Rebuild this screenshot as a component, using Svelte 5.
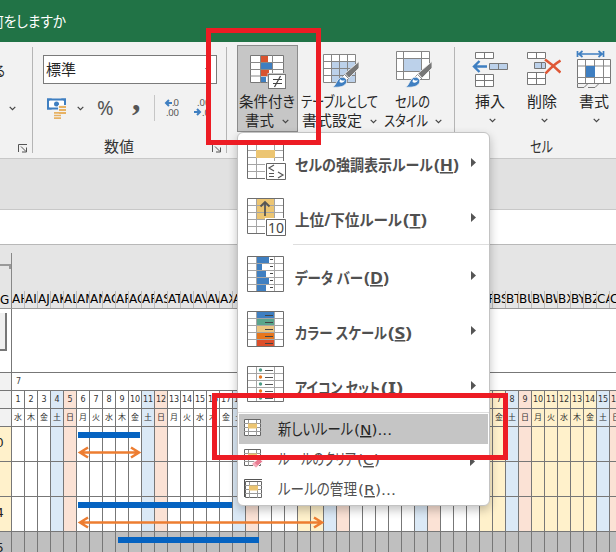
<script>
  const letters = 'ABCDEFGHIJKLMNOPQRSTUVWXYZ';
  const week = ['水', '木', '金', '土', '日', '月', '火'];
  const holidays = [22, 23];
  const days = Array.from({ length: 47 }, (_, i) => {
    const n = i + 33;
    const name = letters[Math.floor(n / 26) - 1] + letters[n % 26];
    const w = week[i % 7];
    let kind = '';
    if (w === '土') kind = 'sat';
    else if (w === '日') kind = 'sun';
    else if (holidays.includes(i) || i >= 36) kind = 'off';
    return { name, day: i < 31 ? i + 1 : i - 30, w, kind };
  });
  const big = [
    { icon: 'highlight', text: 'セルの強調表示ルール', key: 'H', w: 138, kw: 25 },
    { icon: 'top', text: '上位/下位ルール', key: 'T', w: 107, kw: 24 },
    { icon: 'bars', text: 'データ バー', key: 'D', w: 68, kw: 25, sep: true },
    { icon: 'scale', text: 'カラー スケール', key: 'S', w: 92, kw: 24 },
    { icon: 'set', text: 'アイコン セット', key: 'I', w: 85, kw: 22 }
  ];
  const small = [
    { icon: 'new', text: '新しいルール', key: 'N', end: ')...', w: 75, kw: 38, on: true },
    { icon: 'clear', text: 'ルールのクリア', key: 'C', end: ')', w: 78, kw: 23, arrow: true },
    { icon: 'manage', text: 'ルールの管理', key: 'R', end: ')...', w: 79, kw: 38 }
  ];
  const scale = ['#3f7fc1', '#5ba58c', '#ecc580', '#e8761c', '#dc4f2b'];
  const barW = [12, 5, 9, 12, 9];
</script>

{#snippet label(text, w, size = 15)}
  <svg class="label" width={w} height="20"><text x="0" y="15" font-size={size} textLength={w} lengthAdjust="spacingAndGlyphs">{text}</text></svg>
{/snippet}

{#snippet chev()}
  <svg class="chev" width="7" height="5" viewBox="0 0 7 5"><path d="M.7.8 3.5 3.6 6.3.8" fill="none" stroke="#444" stroke-width="1.2" /></svg>
{/snippet}

{#snippet launcher()}
  <svg class="launcher" width="10" height="9" viewBox="0 0 10 9"><path d="M.5 8V.5H9M3 2.5l5 5M8.5 3.5V8H4" fill="none" stroke="#555" /></svg>
{/snippet}

{#snippet brush()}
  <path d="M37 11.5V18L27 28l-4-4.5z" fill="#777" stroke="#f2f2f2" stroke-width=".8" />
  <path d="M22.5 24.5l4 4-2 2-4-4z" fill="#fff" stroke="#777" stroke-width=".8" />
  <path d="M10.5 37c4-1.5 3.5-7 8-9.5 4-1.5 8 2.5 5.5 6-2.5 4-9 4-13.5 3.5z" fill="#3f7fc1" stroke="#f2f2f2" stroke-width=".8" />
  <path d="M18 29c1.5 1.8 3.5 2 5 1-1 2.5-3.5 3.5-5.5 2z" fill="#fff" />
{/snippet}

<div class="window">
  <header>{@render label('何をしますか', 76, 14.5)}</header>

  <div class="ribbon">
    <div class="group stub">
      <div class="ru">{@render label('る', 11, 14)}</div>
      <div class="stubchev">{@render chev()}</div>
      {@render launcher()}
    </div>

    <div class="group number">
      <div class="combo">
        {@render label('標準', 30)}
        <svg width="6" height="4" viewBox="0 0 6 4"><path d="M0 0h6L3 4z" fill="#555" /></svg>
      </div>
      <div class="tools">
        <svg width="20" height="21" viewBox="0 0 20 21">
          <rect x="1" y="1.5" width="17" height="9" fill="#fff" stroke="#3f7fc1" stroke-width="2" />
          <path d="M0 .5h5L0 4.5zM19 .5h-5l5 4zM0 11.500h5L0 8z" fill="#3f7fc1" />
          <circle cx="9.5" cy="6" r="2.5" fill="#3f7fc1" />
          <path d="M11 7h8v12h-5v1.5H6V13h5z" fill="#f2f2f2" />
          <path d="M12 8h7v2h-7zM12 11h7v2h-7zM12 14h7v2h-7zM7 14h6v1.8H7zM7 16.7h7v1.6H7zM7 19.2h7V21H7z" fill="#e7b264" />
        </svg>
        <span class="c1">{@render chev()}</span>
        <span class="pct">%</span>
        <span class="comma">,</span>
        <i></i>
        <svg class="dec" width="54" height="22" viewBox="0 0 54 22">
          <g fill="none" stroke="#3f7fc1" stroke-width="2"><path d="M8 5H2M5 2 2 5l3 3M30 14h6M33 11l3 3-3 3" /></g>
          <g font-size="9.5" fill="#555"><text x="8" y="8" textLength="7">.0</text><text x="2" y="17.5" textLength="13">.00</text><text x="33" y="8">.00</text><text x="38" y="17.5">.0</text></g>
        </svg>
      </div>
      <div class="title t1">{@render label('数値', 30)}</div>
      {@render launcher()}
    </div>

    <div class="group styles">
      <div class="btn active">
        <svg width="38" height="40" viewBox="0 0 38 40">
          <path d="M1.5 5.5h33v27h-33z" fill="#fff" stroke="#777" />
          <path d="M1 12.5h34M1 19.5h34M1 26h34M11.500 5v28M23.500 5v28" stroke="#888" />
          <path d="M12 6h7v6h-7zM12 20h8v6h-8z" fill="#d9532f" />
          <path d="M12 13h11v6H12zM12 27h5v5h-5z" fill="#3f7fc1" />
          <rect x="18.5" y="23" width="20" height="16.5" fill="#c6c6c6" />
          <rect x="19.5" y="24.5" width="17" height="14" fill="#fff" stroke="#777" />
          <path d="M24 29.5h9M24 33.5h9M31.500 26l-6 11" fill="none" stroke="#444" stroke-width="1.2" />
        </svg>
        <div class="l1">{@render label('条件付き', 56)}</div>
        <div class="l2">{@render label('書式', 29)}{@render chev()}</div>
      </div>
      <div class="btn table">
        <svg width="38" height="40" viewBox="0 0 38 40">
          <path d="M1.5 4.5h32v28h-32z" fill="#fff" />
          <path d="M9.5 11.5h24v21h-24z" fill="#bcd1ea" />
          <path d="M1.5 4.5h32v28h-32zM1 11.5h33M1 18.5h33M1 25.5h33M9.500 4v29M17.500 4v29M25.500 4v29" fill="none" stroke="#858585" />
          {@render brush()}
        </svg>
        <div class="l1">{@render label('テーブルとして', 77)}</div>
        <div class="l2">{@render label('書式設定', 60)}{@render chev()}</div>
      </div>
      <div class="btn cellstyle">
        <svg width="38" height="40" viewBox="0 0 38 40">
          <path d="M1.5 1.5h33v28h-33z" fill="#fff" />
          <path d="M8.5 8.5h18v13h-18z" fill="#bcd1ea" />
          <path d="M1.5 1.5h33v28h-33zM1 8.5h34M1 21.5h34M8.500 1v29M26.500 1v29" fill="none" stroke="#858585" />
          {@render brush()}
        </svg>
        <div class="l1">{@render label('セルの', 35)}</div>
        <div class="l2">{@render label('スタイル', 44)}{@render chev()}</div>
      </div>
    </div>

    <div class="group cells">
      <div class="cellrow">
        <div class="btn small">
          <svg width="38" height="40" viewBox="0 0 38 40">
            <g fill="#fff" stroke="#777"><path d="M4.5 2.5h18v6h-18zM13.500 2.5v6M4.500 24.5h18v12h-18zM4.500 30.5h18M13.500 24.5v12" /><path fill="#bcd1ea" d="M18.5 13.5h18v6h-18zM27.500 13.5v6" /></g>
            <path d="M16 16.5H3M8.500 11 3 16.5 8.500 22" fill="none" stroke="#3f7fc1" stroke-width="2.4" />
          </svg>
          <div class="l1">{@render label('挿入', 30)}</div>{@render chev()}
        </div>
        <div class="btn small">
          <svg width="38" height="40" viewBox="0 0 38 40">
            <g fill="#fff" stroke="#777"><path d="M4.5 2.5h18v6h-18zM13.500 2.5v6M4.500 22.5h18v12h-18zM4.500 28.5h18M13.500 22.5v12" /><path fill="#bcd1ea" d="M11.5 12.5h11v6h-11zM18.500 12.5v6" /></g>
            <path d="M22 9.5c6 4 11 8.5 15.5 13M37.500 10.5c-6 3.5-10.500 8-15 13" fill="none" stroke="#f2f2f2" stroke-width="4" />
            <path d="M22 9.5c6 4 11 8.5 15.5 13M37.500 10.5c-6 3.5-10.500 8-15 13" fill="none" stroke="#df5836" stroke-width="2.6" />
          </svg>
          <div class="l1">{@render label('削除', 30)}</div>{@render chev()}
        </div>
        <div class="btn small">
          <svg width="38" height="40" viewBox="0 0 38 40">
            <path d="M4 4h23M7.500 1 4 4l3.500 3M23.500 1 27 4l-3.500 3M2.500 1v6M28.500 1v6" fill="none" stroke="#3f7fc1" stroke-width="1.7" />
            <path d="M2.5 9.5h33v24h-33z" fill="#fff" stroke="#777" />
            <path d="M2.5 16h33M2.500 27.5h33M10.500 10v23M19.500 10v23M28.500 10v23" stroke="#888" />
            <path d="M11 16h9v11h-9z" fill="#3f7fc1" />
            <path d="M2.5 34v3.5H9l4-4M13 37.5h7l3.500-3.5" fill="none" stroke="#777" />
          </svg>
          <div class="l1">{@render label('書式', 30)}</div>{@render chev()}
        </div>
      </div>
      <div class="title t2">{@render label('セル', 23)}</div>
    </div>
  </div>

  <div class="gap"></div>
  <div class="formula"></div>

  <div class="sheet">
    <div class="row heads">
      <div class="side"><b></b><span>G</span></div>
      {#each days as d}<div class="head">{d.name}</div>{/each}
    </div>
    <div class="row blank"><div class="side"><div class="grip"></div></div><div class="wide"></div></div>
    <div class="row month"><div class="side"></div><div class="wide">7</div></div>
    <div class="row date"><div class="side"></div>{#each days as d}<div class="cell {d.kind}">{d.day}</div>{/each}</div>
    <div class="row date"><div class="side"></div>{#each days as d}<div class="cell {d.kind}">{d.w}</div>{/each}</div>
    {#each ['0', '', '4'] as n}
      <div class="row task"><div class="side">{n}</div>{#each days as d}<div class="cell {d.kind}"></div>{/each}</div>
    {/each}
    <div class="row task grey"><div class="side">5</div>{#each days as d}<div class="cell"></div>{/each}</div>
    <svg class="chart" width="616" height="126" viewBox="0 426 616 126">
      <path d="M78 432h62v6H78zM78 502h154v6H78zM118 537h141v6H118z" fill="#0563c1" />
      <path d="M81 452.5h57M88 447.5l-8 5 8 5M131 447.5l8 5-8 5M81 522.5h240M88 517.5l-8 5 8 5M314 517.5l8 5-8 5" fill="none" stroke="#ed7d31" stroke-width="2.5" />
    </svg>
  </div>

  <div class="menu">
    {#each big as m}
      {#if m.sep}<div class="sep inset"></div>{/if}
      <div class="item">
        <svg class="pic" width="40" height="40" viewBox="0 0 40 40">
          <path d="M.5.5h36v35H.5z" fill="#fff" />
          {#if m.icon === 'top'}<path d="M9 1h18v20H9z" fill="#ecc572" />{/if}
          <path d="M.5 7.5h36M.5 14.5h36M.5 21.5h36M.5 28.5h36M9.5.5v35M27.5.5v35" fill="none" stroke="#a5a5a5" />
          <path d="M.5.5h36v35H.5z" fill="none" stroke="#6e6e6e" />
          {#if m.icon === 'bars'}
            {#each barW as b, i}<rect x="10" y={1 + i * 7} width={b} height="6" fill="#3f7fc1" /><path d="M23 {3.5 + i * 7}h3" stroke="#444" />{/each}
          {:else if m.icon === 'scale'}
            {#each scale as c, i}<rect x="10" y={1 + i * 7} width="17" height="6" fill={c} /><path d="M18 {4.5 + i * 7}h8" stroke="#444" />{/each}
          {:else if m.icon === 'set'}
            {#each scale as c, i}<circle cx="13.5" cy={4 + i * 7} r="1.7" fill={i % 2 ? '#e8761c' : '#4d9b86'} /><path d="M18 {4.5 + i * 7}h8" stroke="#555" />{/each}
          {:else if m.icon === 'highlight'}
            <path d="M9 7h19v8H9z" fill="#ecc572" />
            <path d="M18 18h22v22H18z" fill="#fff" /><path d="M19.5 20.5h19v16h-19z" fill="#fff" stroke="#666" />
            <path d="M27 22l-5 3 5 3M22 30.5h5M22 33.5h5M31 29l5 3-5 3" fill="none" stroke="#555" stroke-width="1.2" />
          {:else if m.icon === 'top'}
            <path d="M18 4v14M13.5 8.5 18 4l4.5 4.5" fill="none" stroke="#555" stroke-width="1.8" />
            <path d="M18 20h22v20H18z" fill="#fff" /><path d="M19.5 21.5h19v16h-19z" fill="#fff" stroke="#666" />
            <text x="21" y="35" font-size="14" textLength="16" fill="#444">10</text>
          {/if}
        </svg>
        <svg class="label bold" width={m.w + m.kw} height="20">
          <text x="0" y="15" font-size="15.5" textLength={m.w} lengthAdjust="spacingAndGlyphs">{m.text}</text>
          <text class="latin" x={m.w + 1} y="15" font-size="14.5" textLength={m.kw} lengthAdjust="spacingAndGlyphs">(<tspan class="key">{m.key}</tspan>)</text>
        </svg>
        <svg class="arr" width="5" height="9"><path d="M0 0l5 4.500L0 9z" fill="#555" /></svg>
      </div>
    {/each}
    <div class="sep"></div>
    {#each small as m}
      <div class="item mini" class:on={m.on}>
        <svg class="pic" width="22" height="20" viewBox="0 0 22 20">
          {#if m.icon === 'manage'}<path d="M.5 18V.5H18" fill="none" stroke="#555" />{/if}
          <g transform={m.icon === 'manage' ? 'translate(1 2)' : 'translate(0 0)'}>
            <path d="M.5.5h16v16H.5z" fill="#fff" stroke="#666" />
            <path d="M0 4.5h17M0 12.5h17M4.500 1v16M12.500 1v16M0 8.5h4M13 8.5h4" stroke="#999" />
            <path d="M4 4.5h9v5H4z" fill="#ecc572" />
          </g>
          {#if m.icon === 'clear'}<path d="M8 15l7-6 4 3.5-7 6z" fill="#e87b91" stroke="#fff" /><path d="M8 15l2-1.7 4 3.5-2 1.7z" fill="#f4a9b8" />{/if}
        </svg>
        <svg class="label" width={m.w + m.kw} height="20">
          <text x="0" y="15" font-size="15.5" textLength={m.w} lengthAdjust="spacingAndGlyphs">{m.text}</text>
          <text class="latin" x={m.w + 1} y="15" font-size="14.5" textLength={m.kw} lengthAdjust="spacingAndGlyphs">(<tspan class="key">{m.key}</tspan>{m.end}</text>
        </svg>
        {#if m.arrow}<svg class="arr" width="5" height="9"><path d="M0 0l5 4.500L0 9z" fill="#555" /></svg>{/if}
      </div>
    {/each}
  </div>

  <div class="mark first"></div>
  <div class="mark second"></div>
</div>

<style>
  .window { position: relative; width: 616px; height: 552px; overflow: hidden; background: #fff; font-family: "Noto Sans", "Noto Sans CJK JP", sans-serif; color: #262626; }
  .window :global(*) { box-sizing: border-box; }
  svg { display: block; flex: none; }
  .label { overflow: visible; fill: currentColor; font-family: "Noto Sans", "Noto Sans CJK JP", sans-serif; font-feature-settings: "palt"; }
  .latin { font-family: "DejaVu Sans", sans-serif; }
  .bold .latin { font-family: "Noto Sans", sans-serif; font-size: 15.5px; }
  header { height: 42px; background: #217346; color: #fff; padding: 12px 0 0; display: flex; }
  header .label { margin-left: -10px; }
  .ribbon { display: flex; height: 117px; background: #f2f2f2; border-bottom: 1px solid #c8c8c8; }
  .group { position: relative; flex: none; }
  .group::after { content: ""; position: absolute; right: 0; top: 5px; width: 1px; height: 106px; background: #b5b5b5; }
  .launcher { position: absolute; right: 5px; top: 102px; }
  .stub { width: 33px; padding-top: 19px; }
  .ru .label { margin-left: -6px; }
  .stubchev { margin: 25px 0 0 9px; }
  .number { width: 194px; padding: 13px 0 0 10px; }
  .combo { width: 174px; height: 29px; border: 1px solid #7a7a7a; background: #fff; display: flex; justify-content: space-between; align-items: center; padding: 0 5px 0 2px; }
  .tools { display: flex; align-items: flex-start; padding: 14px 0 0 4px; height: 53px; }
  .c1 { margin: 8px 0 0 10px; }
  .pct { width: 18px; margin: -1px 0 0 13px; font: 20px/22px "Noto Sans", sans-serif; color: #555; }
  .comma { width: 8px; margin: -11px 0 0 17px; font: bold 34px/24px "Liberation Serif", serif; color: #555; }
  .tools i { width: 1px; height: 26px; margin: -3px 9px 0 14px; background: #c6c6c6; }
  .title { display: flex; color: #333; }
  .t1 { margin-left: 61px; }
  .styles { width: 228px; display: flex; padding: 3px 0 0 10px; }
  .btn { display: flex; flex-direction: column; align-items: center; flex: none; height: 87px; padding-top: 5px; }
  .active { width: 61px; background: #c6c6c6; outline: 1px solid #8c8c8c; outline-offset: -1px; }
  .active .l1 { margin-left: -1px; }
  .l1 { margin-top: 2px; height: 19px; }
  .l2 { display: flex; align-items: center; gap: 8px; height: 20px; }
  .active .l2 { margin-left: -2px; }
  .table { width: 82px; }
  .table > svg { margin-left: 3px; }
  .cellstyle { width: 68px; }
  .cellstyle .l1 { margin-left: -3px; }
  .cellstyle .l2 { gap: 7px; margin-left: -3px; }
  .cells { width: 170px; padding-top: 3px; }
  .cells::after { display: none; }
  .cellrow { display: flex; padding-left: 9px; height: 92px; }
  .small { width: 52px; }
  .small .chev { margin-top: 7px; margin-left: 4px; }
  .t2 { margin-left: 75px; }
  .gap { height: 51px; background: #e1e1e1; border-bottom: 1px solid #c8c8c8; }
  .formula { height: 35px; border-bottom: 1px solid #b8b8b8; }
  .row { display: flex; width: 622px; border-bottom: 1px solid #777; }
  .side { flex: none; width: 11px; overflow: hidden; }
  .heads { height: 64px; background: #e5e5e5; border-color: #999; }
  .heads .side { position: relative; font: 12px/16px "DejaVu Sans", sans-serif; color: #000; display: flex; align-items: flex-end; }
  .heads .side b { position: absolute; left: 0; top: 19px; width: 11px; height: 5px; border-top: 2px solid #999; border-right: 2px solid #999; }
  .head { flex: none; width: 13px; overflow: hidden; border-left: 1px solid #bbb; margin-top: 46px; padding-top: 1px; font: 12px/15px "DejaVu Sans", sans-serif; color: #000; }
  .heads .head:nth-child(2) { margin-top: 8px; padding-top: 39px; border-color: #888; }
  .wide { flex: 1; border-left: 1px solid #777; }
  .blank { height: 64px; }
  .grip { width: 7px; height: 38px; margin-top: 4px; background: #f0f0f0; border: solid #777; border-width: 0 2px 2px 0; }
  .month { height: 18px; font: 8px/17px "DejaVu Sans", sans-serif; color: #444; }
  .month .wide { padding-left: 4px; }
  .month .side, .date .side { background: #f2f2f2; }
  .date { height: 18px; }
  .cell { flex: none; width: 13px; border-left: 1px solid #777; font: 8px/17px "DejaVu Sans", "Noto Sans CJK JP", sans-serif; text-align: center; color: #333; white-space: nowrap; }
  .sat { background: #dbe9f6; }
  .sun { background: #fbe2d5; }
  .off { background: #fff1cb; }
  .task { height: 35px; }
  .task .side { background: #fff1cb; font: 12px/33px "DejaVu Sans", sans-serif; color: #222; text-indent: -4px; }
  .grey, .grey .side { background: #bfbfbf; }
  .chart { position: absolute; left: 0; top: 426px; }
  .menu { position: absolute; left: 237px; top: 132px; width: 253px; height: 374px; background: #fff; border: 1px solid #c3c3c3; border-radius: 6px; box-shadow: 0 4px 10px rgba(0, 0, 0, .24); color: #505050; }
  .item { display: flex; align-items: flex-start; height: 55px; padding: 10px 13px 0 9px; }
  .item .label { margin: 13px 0 0 8px; }
  .bold { font-weight: 700; }
  .key { text-decoration: underline; text-underline-offset: 2px; }
  .arr { margin: 15px 0 0 auto; }
  .sep { height: 3px; padding-top: 1px; background: #dedede content-box; padding-bottom: 1px; }
  .inset { margin-left: 55px; }
  .mini { height: 30px; padding: 5px 13px 0 5px; margin: 0 1px; }
  .mini .label { margin: 1px 0 0 12px; }
  .mini .arr { margin-top: 8px; }
  .on { background: #c5c5c5; color: #262626; }
  .mark { position: absolute; border: 5px solid #ed1c24; }
  .first { left: 206px; top: 28px; width: 115px; height: 117px; }
  .second { left: 212px; top: 393px; width: 296px; height: 67px; }
</style>
